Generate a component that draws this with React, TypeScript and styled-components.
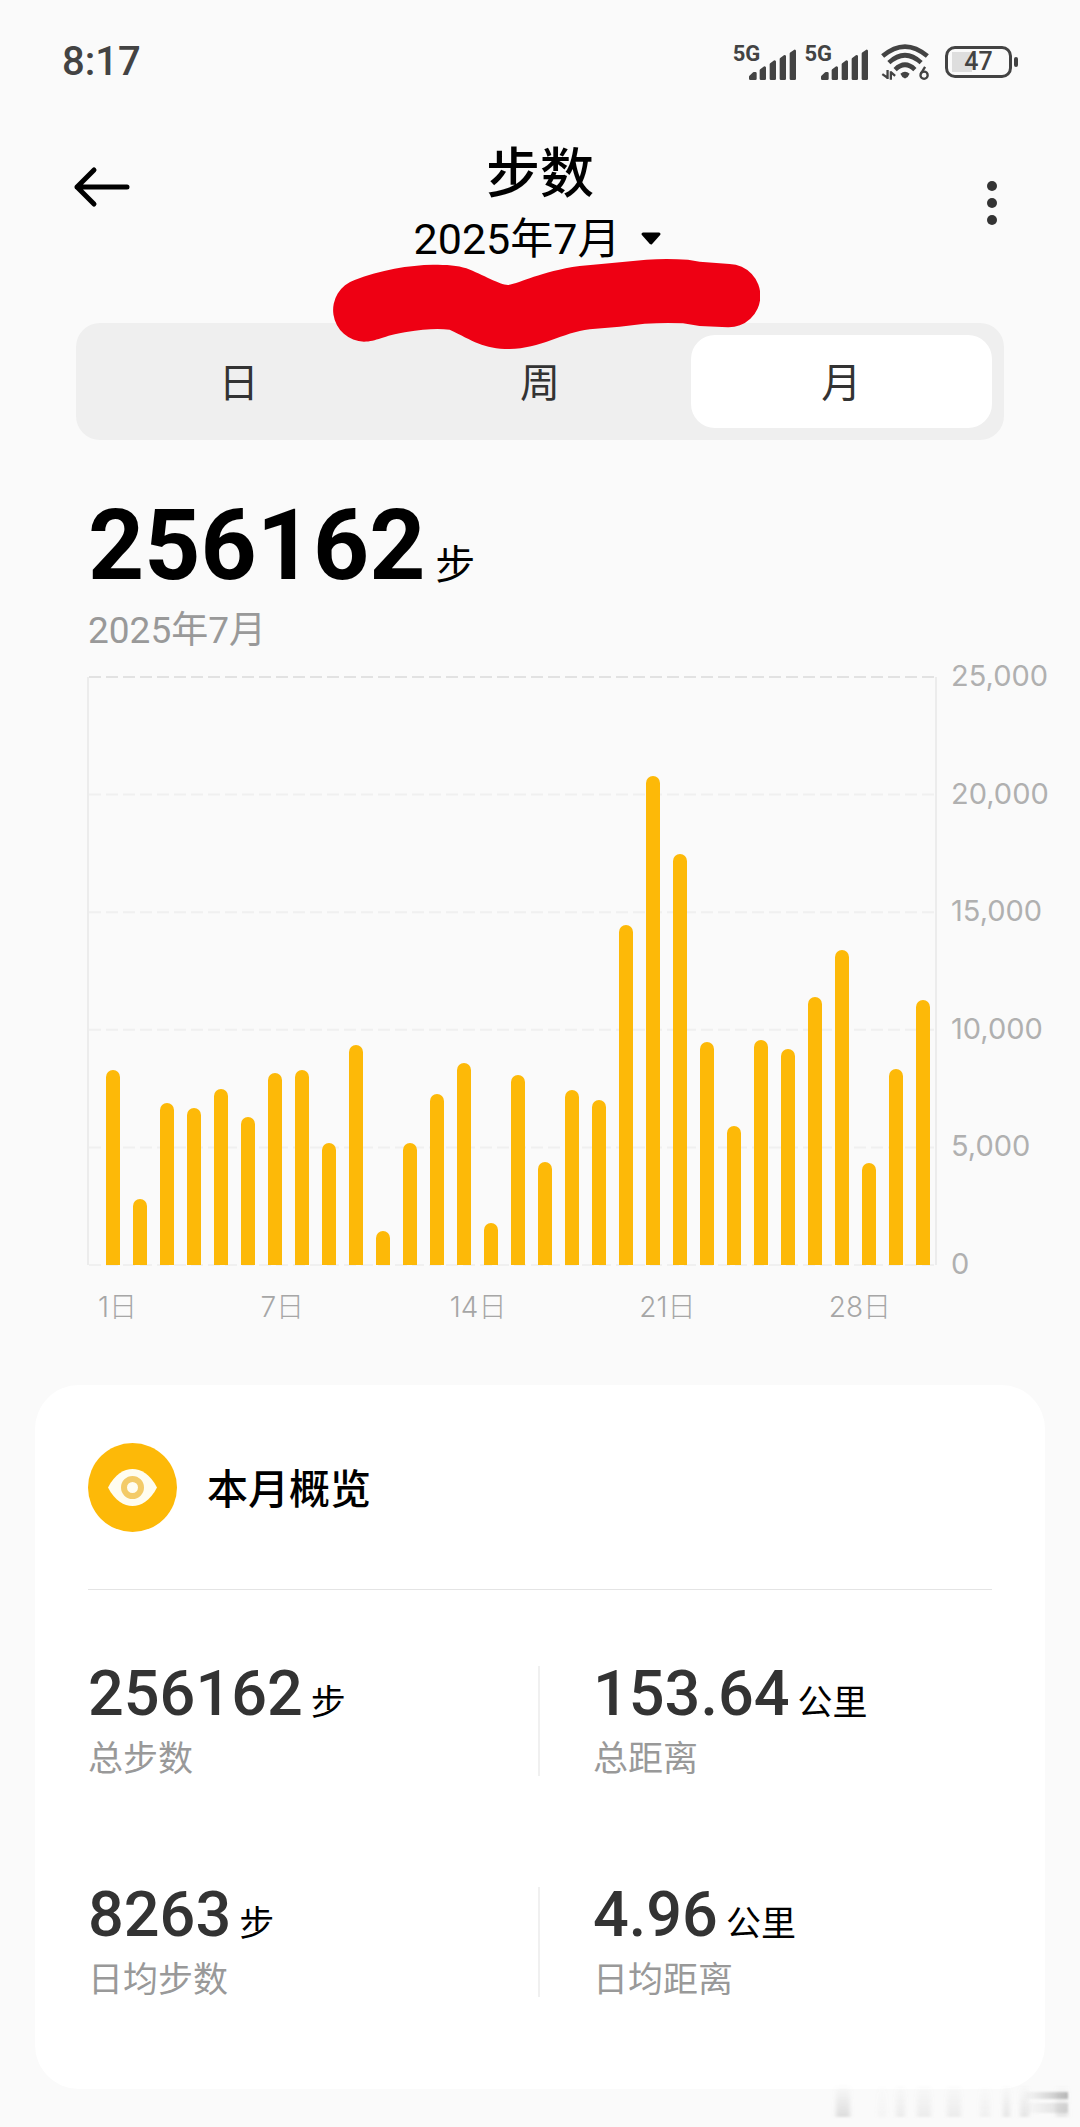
import React, { useState } from "react";
import styled, { createGlobalStyle } from "styled-components";

const GlobalStyle = createGlobalStyle`
  * { box-sizing: border-box; }
  body {
    margin: 0;
    background: #fafafa;
    color: #000;
    font-family: Roboto, "Noto Sans CJK SC", sans-serif;
  }
  button {
    border: 0;
    padding: 0;
    background: none;
    color: inherit;
    font: inherit;
    cursor: pointer;
  }
  h1, h2, p, dl, dd, dt { margin: 0; font-weight: 400; }
`;

const Page = styled.div`
  position: relative;
  padding-bottom: 38px;
`;

/* ---------- status bar ---------- */

const StatusBar = styled.div`
  display: flex;
  align-items: center;
  justify-content: space-between;
  height: 124px;
  padding: 0 62px;
  color: #434343;
`;

const Clock = styled.span`
  font-size: 40px;
  line-height: 48px;
  font-weight: 500;
`;

const StatusIcons = styled.div`
  display: flex;
  align-items: center;
`;

const Signal = styled.span`
  display: flex;
  align-items: flex-end;
  height: 36px;
  margin-right: 8px;
`;

const Network = styled.span`
  align-self: flex-start;
  margin-right: -11px;
  font-size: 22px;
  line-height: 20px;
  font-weight: 700;
`;

const WifiIcon = styled.svg`
  width: 50px;
  height: 40px;
  margin: 0 15px 0 4px;
`;

const Battery = styled.span`
  display: flex;
  align-items: center;
  gap: 2px;
`;

const BatteryBody = styled.span`
  display: flex;
  align-items: center;
  justify-content: center;
  width: 67px;
  height: 32px;
  border: 3px solid #434343;
  border-radius: 10px;
  background: linear-gradient(#dedede, #dedede) 4px 3px / 20px 20px no-repeat;
  font-size: 25px;
  line-height: 26px;
  font-weight: 500;
`;

const BatteryTip = styled.span`
  width: 4px;
  height: 10px;
  border-radius: 2px;
  background: #434343;
`;

/* ---------- header ---------- */

const Header = styled.header`
  position: relative;
  display: grid;
  grid-template-columns: 60px 1fr 60px;
  align-items: center;
  padding: 15px 72px 0;
`;

const BackButton = styled.button`
  align-self: start;
  display: flex;
  align-items: center;
  height: 96px;
`;

const MenuButton = styled.button`
  display: flex;
  justify-content: flex-end;
  align-items: center;
  height: 60px;
  padding-right: 11px;
`;

const TitleBlock = styled.div`
  display: flex;
  flex-direction: column;
  align-items: center;
`;

const Title = styled.h1`
  font-size: 54px;
  line-height: 72px;
  && { font-weight: 500; }
`;

const MonthPicker = styled.button`
  display: flex;
  align-items: center;
  gap: 20px;
  padding-right: 4px;
  font-size: 43px;
  line-height: 56px;
`;

const Marker = styled.svg`
  position: absolute;
  left: calc(50% - 208px);
  top: 134px;
  width: 428px;
  height: 92px;
  pointer-events: none;
`;

/* ---------- tabs ---------- */

const Tabs = styled.div`
  display: grid;
  grid-template-columns: repeat(3, 1fr);
  height: 117px;
  margin: 56px 76px 0;
  padding: 12px;
  border-radius: 24px;
  background: #efefef;
`;

const Tab = styled.button<{ $active: boolean }>`
  padding-top: 4px;
  border-radius: 24px;
  background: ${(p) => (p.$active ? "#fff" : "transparent")};
  color: #333;
  font-size: 40px;
  line-height: 48px;
`;

/* ---------- total ---------- */

const Total = styled.section`
  padding: 58px 88px 0;
`;

const Reading = styled.p`
  display: flex;
  align-items: baseline;
  gap: 10px;
`;

const BigNumber = styled.strong`
  font-size: 98px;
  line-height: 96px;
  font-weight: 700;
`;

const BigUnit = styled.span`
  font-size: 40px;
  line-height: 40px;
`;

const Period = styled.p`
  margin-top: 15px;
  color: #999;
  font-size: 37px;
  line-height: 44px;
`;

/* ---------- chart ---------- */

const Chart = styled.section`
  display: grid;
  grid-template-columns: 1fr 128px;
  padding: 24px 0 0 87px;
  margin-right: 15px;
  color: #b0b0b0;
  font-family: Inter, "Noto Sans CJK SC", sans-serif;
  font-size: 29px;
  line-height: 36px;
`;

const Plot = styled.div`
  position: relative;
  height: 588px;
  border: solid #ececec;
  border-width: 0 2px;
`;

const Grid = styled.svg`
  position: absolute;
  inset: 0;
  width: 100%;
  height: 100%;
  overflow: visible;
`;

const Bars = styled.div`
  position: relative;
  display: flex;
  align-items: flex-end;
  justify-content: space-between;
  height: 100%;
  padding: 0 5px 0 17px;
`;

const Bar = styled.span`
  width: 14px;
  border-radius: 7px 7px 0 0;
  background: #fdb908;
`;

const YAxis = styled.div`
  display: flex;
  flex-direction: column;
  justify-content: space-between;
  margin: -19px 0 -17px;
  padding-left: 14px;
`;

const XAxis = styled.div`
  display: grid;
  grid-template-columns: repeat(31, 1fr);
  margin-top: 24px;
  padding-left: 11px;
  font-size: 28px;
  font-weight: 300;
  color: #a6a6a6;
`;

const DayLabel = styled.span<{ $day: number }>`
  grid-column: ${(p) => p.$day} / span 4;
  grid-row: 1;
  white-space: nowrap;
`;

/* ---------- overview card ---------- */

const Card = styled.section`
  margin: 60px 35px 0;
  padding: 58px 53px 92px;
  border-radius: 44px;
  background: #fff;
`;

const CardHead = styled.div`
  display: flex;
  align-items: center;
  gap: 30px;
  padding-bottom: 57px;
  border-bottom: 1px solid #e4e4e4;
`;

const CardTitle = styled.h2`
  padding-top: 4px;
  font-size: 41px;
  line-height: 56px;
  && { font-weight: 500; }
`;

const Stats = styled.dl`
  display: grid;
  grid-template-columns: 1fr 1fr;
  row-gap: 111px;
  padding-top: 76px;
`;

const Stat = styled.div`
  display: flex;
  flex-direction: column-reverse;
  gap: 22px;
  &:nth-child(odd) { border-right: 2px solid #f0f0f0; }
  &:nth-child(even) { padding-left: 53px; }
`;

const StatLabel = styled.dt`
  color: #999;
  font-size: 35px;
  line-height: 32px;
`;

const StatValue = styled.dd`
  display: flex;
  align-items: baseline;
  gap: 8px;
`;

const StatNumber = styled.span`
  color: #333;
  font-size: 63px;
  line-height: 56px;
  font-weight: 500;
`;

const StatUnit = styled.span`
  font-size: 35px;
  line-height: 36px;
`;

const Watermark = styled.svg`
  position: absolute;
  right: 6px;
  bottom: 0;
  width: 244px;
  height: 46px;
`;

const DAILY_STEPS = [
  8311, 2821, 6906, 6694, 7477, 6298, 8157, 8311, 5191, 9362, 1460, 5191, 7264,
  8608, 1787, 8085, 4383, 7438, 7021, 14468, 20808, 17455, 9489, 5923, 9557,
  9191, 11404, 13383, 4340, 8353, 11276,
];
const MAX = 25000;
const TICKS = [25000, 20000, 15000, 10000, 5000, 0];
const DAYS = [1, 7, 14, 21, 28];
const TABS = ["日", "周", "月"];
const STATS = [
  { label: "总步数", value: "256162", unit: "步" },
  { label: "总距离", value: "153.64", unit: "公里" },
  { label: "日均步数", value: "8263", unit: "步" },
  { label: "日均距离", value: "4.96", unit: "公里" },
];

const SignalBars = () => (
  <svg width="47" height="31" viewBox="0 0 141 93" fill="#434343" stroke="#434343" strokeWidth="8" strokeLinejoin="round">
    <path d="M4 83 L15 73 H19 V89 H4Z" />
    <path d="M36 64 L47 56 V89 H36Z" />
    <path d="M66 46 L77 38 V89 H66Z" />
    <path d="M96 30 L107 22 V89 H96Z" />
    <path d="M126 14 L137 6 V89 H126Z" />
  </svg>
);

const Wifi = () => (
  <WifiIcon viewBox="540 70 152 120" fill="none" stroke="#434343" strokeWidth="14">
    <path d="M548 112 Q616 54 684 112" />
    <path d="M567 132 Q616 87 665 132" />
    <path d="M586 153 Q616 124 646 153" />
    <path d="M602 166 Q616 154 630 166 Q627 176 616 180 Q605 176 602 166Z" fill="#434343" stroke="none" />
    <path d="M563 154 V182 M563 178 L547 167 M573 184 V158 M573 161 L586 172" strokeWidth="7" />
    <circle cx="674" cy="170" r="11" strokeWidth="7" />
    <path d="M664 166 L677 145" strokeWidth="7" />
  </WifiIcon>
);

export default function App() {
  const [active, setActive] = useState("月");
  return (
    <Page>
      <GlobalStyle />
      <StatusBar>
        <Clock>8:17</Clock>
        <StatusIcons>
          <Signal><Network>5G</Network><SignalBars /></Signal>
          <Signal><Network>5G</Network><SignalBars /></Signal>
          <Wifi />
          <Battery><BatteryBody>47</BatteryBody><BatteryTip /></Battery>
        </StatusIcons>
      </StatusBar>

      <Header>
        <BackButton aria-label="返回">
          <svg width="60" height="44" viewBox="0 0 60 44" fill="none" stroke="#000" strokeWidth="5" strokeLinecap="round" strokeLinejoin="round">
            <path d="M5 22 H55 M22 5 L5 22 L22 39" />
          </svg>
        </BackButton>
        <TitleBlock>
          <Title>步数</Title>
          <MonthPicker>
            2025年7月
            <svg width="22" height="14" viewBox="0 0 22 14">
              <path d="M3 2 H19 L11 11Z" stroke="#000" strokeWidth="3" strokeLinejoin="round" />
            </svg>
          </MonthPicker>
        </TitleBlock>
        <MenuButton aria-label="更多">
          <svg width="10" height="44" viewBox="0 0 10 44" fill="#333">
            <circle cx="5" cy="5" r="5" />
            <circle cx="5" cy="22" r="5" />
            <circle cx="5" cy="39" r="5" />
          </svg>
        </MenuButton>
        <Marker viewBox="97 412 1284 276">
          <path
            fill="#ee0013"
            d="M193 663 A95 95 0 0 1 165 478 C240 448 330 433 400 432 C440 432 475 434 500 443 C550 462 600 493 625 493 C665 487 720 453 840 436 L905 430 L1040 417 Q1100 413 1165 417 L1200 423 L1290 430 A95 95 0 0 1 1284 620 L1200 616 L1150 608 Q1100 605 1035 609 L960 618 L870 626 C790 635 720 685 630 685 C550 685 520 660 450 627 Q400 620 320 634 C250 645 230 663 193 663Z"
          />
        </Marker>
      </Header>

      <Tabs role="tablist">
        {TABS.map((t) => (
          <Tab key={t} role="tab" aria-selected={t === active} $active={t === active} onClick={() => setActive(t)}>
            {t}
          </Tab>
        ))}
      </Tabs>

      <Total>
        <Reading>
          <BigNumber>256162</BigNumber>
          <BigUnit>步</BigUnit>
        </Reading>
        <Period>2025年7月</Period>
      </Total>

      <Chart>
        <Plot>
          <Grid>
            {TICKS.map((t) => (
              <line
                key={t}
                x1="0"
                x2="100%"
                y1={`${100 - (t / MAX) * 100}%`}
                y2={`${100 - (t / MAX) * 100}%`}
                stroke={t === MAX ? "#e2e2e2" : "#f0f0f0"}
                strokeWidth="2"
                strokeDasharray="12 5"
              />
            ))}
          </Grid>
          <Bars>
            {DAILY_STEPS.map((v, i) => (
              <Bar key={i} style={{ height: `${(v / MAX) * 100}%` }} />
            ))}
          </Bars>
        </Plot>
        <YAxis>
          {TICKS.map((t) => (
            <span key={t}>{t.toLocaleString("en-US")}</span>
          ))}
        </YAxis>
        <XAxis>
          {DAYS.map((d) => (
            <DayLabel key={d} $day={d}>{d}日</DayLabel>
          ))}
        </XAxis>
      </Chart>

      <Card>
        <CardHead>
          <svg width="89" height="89" viewBox="0 0 89 89">
            <circle cx="44.5" cy="44.5" r="44.5" fill="#fdb908" />
            <path d="M20 44.5 C27 31 36 26 44.5 26 C53 26 62 31 69 44.5 C62 58 53 63 44.5 63 C36 63 27 58 20 44.5Z" fill="#fffdf0" />
            <circle cx="44.5" cy="44.5" r="8.5" fill="none" stroke="#f3cb68" strokeWidth="6" />
          </svg>
          <CardTitle>本月概览</CardTitle>
        </CardHead>
        <Stats>
          {STATS.map((s) => (
            <Stat key={s.label}>
              <StatLabel>{s.label}</StatLabel>
              <StatValue>
                <StatNumber>{s.value}</StatNumber>
                <StatUnit>{s.unit}</StatUnit>
              </StatValue>
            </Stat>
          ))}
        </Stats>
      </Card>

      <Watermark viewBox="0 0 244 46" aria-hidden="true">
        <defs>
          <linearGradient id="fade" x1="0" y1="0" x2="0" y2="1">
            <stop offset="0" stopColor="#999" stopOpacity="0" />
            <stop offset="1" stopColor="#999" stopOpacity="0.3" />
          </linearGradient>
          <linearGradient id="tail" x1="0" y1="0" x2="1" y2="0">
            <stop offset="0" stopColor="#999" stopOpacity="0.05" />
            <stop offset="1" stopColor="#777" stopOpacity="0.5" />
          </linearGradient>
          <filter id="soft"><feGaussianBlur stdDeviation="2 1" /></filter>
          <filter id="thin"><feGaussianBlur stdDeviation="1 1" /></filter>
        </defs>
        <g fill="url(#fade)" filter="url(#soft)">
          <rect x="6" y="4" width="14" height="32" />
          <rect x="48" y="4" width="8" height="32" opacity="0.2" />
          <rect x="66" y="4" width="9" height="32" opacity="0.5" />
          <rect x="87" y="4" width="14" height="32" opacity="0.5" />
          <rect x="117" y="4" width="14" height="32" opacity="0.5" />
          <rect x="150" y="4" width="10" height="32" opacity="0.35" />
          <rect x="173" y="4" width="7" height="32" opacity="0.7" />
          <rect x="190" y="4" width="9" height="32" opacity="0.7" />
          <rect x="226" y="4" width="12" height="32" opacity="0.7" />
        </g>
        <g fill="url(#tail)" filter="url(#thin)">
          <rect x="196" y="11" width="42" height="7" />
          <rect x="196" y="22" width="42" height="10" opacity="0.5" />
        </g>
      </Watermark>
    </Page>
  );
}
